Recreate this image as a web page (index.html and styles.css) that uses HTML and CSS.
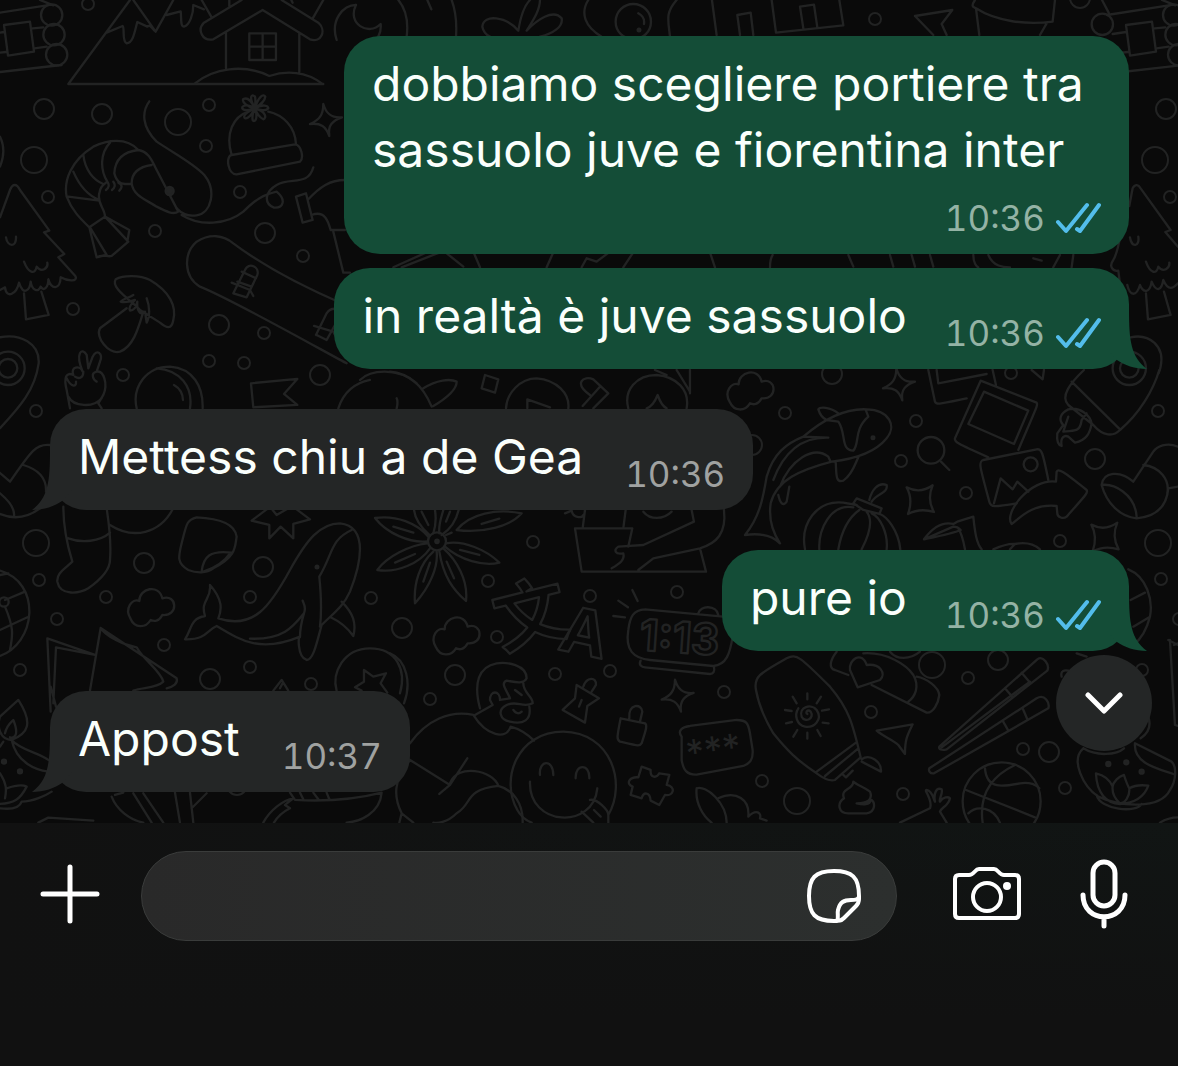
FILE: index.html
```html
<!doctype html>
<html lang="it">
<head>
    <meta charset="utf-8">
    <meta name="viewport" content="width=device-width, initial-scale=1">
    <title>Chat</title>
    <link rel="stylesheet" href="styles.css">
</head>
<body>

<!-- shared shapes -->
<svg class="defs" aria-hidden="true">
    <symbol id="ticks" viewBox="0 0 46 32">
        <path d="M3 20l8 9L32 3M22 27l3 2L44 3"/>
    </symbol>
    <symbol id="tail" viewBox="0 0 40 60">
        <path d="M22 0C22 32 24 48 40 60C28 60 17 56 10 51L0 40V0z"/>
    </symbol>
</svg>

<main class="chat">
    <svg class="wallpaper" viewBox="0 0 1178 823" preserveAspectRatio="xMidYMin slice" aria-hidden="true">
        <defs>
            <path id="cloud" d="M-60 32C-80 0 -55 -30 -34 -22C-35 -60 25 -75 35 -30C80 -45 85 25 35 20C25 40 10 40 0 35C-15 60 -48 60 -60 32z"/>
            <path id="spark" d="M-8 -48C0 -20 15 -5 48 -8C20 2 5 15 10 48C0 20 -15 8 -48 12C-20 0 -8 -15 -8 -48z"/>
            <path id="star4" d="M-40 -36Q0 -15 38 -42Q20 0 42 38Q0 25 -36 44Q-20 0 -40 -36z"/>
        </defs>

        <!-- dots -->
        <g>
            <circle cx="88" cy="4" r="6"/><circle cx="209" cy="105" r="6"/><circle cx="206" cy="146" r="6"/>
            <circle cx="48" cy="197" r="6"/><circle cx="240" cy="192" r="6"/><circle cx="155" cy="231" r="6"/>
            <circle cx="303" cy="256" r="6"/><circle cx="73" cy="309" r="6"/><circle cx="264" cy="333" r="6"/>
            <circle cx="209" cy="361" r="6"/><circle cx="244" cy="363" r="6"/><circle cx="123" cy="375" r="6"/>
            <circle cx="36" cy="411" r="6"/><circle cx="39" cy="580" r="6"/><circle cx="57" cy="619" r="6"/>
            <circle cx="106" cy="597" r="6"/><circle cx="20" cy="670" r="6"/><circle cx="164" cy="645" r="6"/>
            <circle cx="250" cy="597" r="6"/><circle cx="250" cy="667" r="6"/><circle cx="371" cy="598" r="6"/>
            <circle cx="311" cy="684" r="6"/><circle cx="533" cy="542" r="6"/><circle cx="488" cy="581" r="6"/>
            <circle cx="590" cy="596" r="6"/><circle cx="677" cy="592" r="6"/><circle cx="497" cy="637" r="6"/>
            <circle cx="555" cy="674" r="6"/><circle cx="610" cy="671" r="6"/><circle cx="430" cy="699" r="6"/>
            <circle cx="724" cy="692" r="6"/><circle cx="762" cy="781" r="6"/><circle cx="785" cy="413" r="6"/>
            <circle cx="916" cy="421" r="6"/><circle cx="901" cy="461" r="6"/><circle cx="966" cy="493" r="6"/>
            <circle cx="1060" cy="541" r="6"/><circle cx="1158" cy="411" r="6"/><circle cx="1161" cy="579" r="6"/>
            <circle cx="1011" cy="373" r="6"/><circle cx="1179" cy="619" r="6"/><circle cx="968" cy="678" r="6"/>
            <circle cx="871" cy="712" r="6"/><circle cx="1023" cy="749" r="6"/><circle cx="1065" cy="788" r="6"/>
            <circle cx="903" cy="794" r="6"/><circle cx="1142" cy="670" r="6"/><circle cx="875" cy="19" r="6"/>
            <circle cx="1170" cy="197" r="6"/>
            <circle cx="44" cy="109" r="10"/><circle cx="102" cy="114" r="10"/><circle cx="265" cy="233" r="10"/>
            <circle cx="219" cy="325" r="10"/><circle cx="320" cy="375" r="10"/><circle cx="144" cy="563" r="10"/>
            <circle cx="263" cy="567" r="10"/><circle cx="210" cy="679" r="10"/><circle cx="402" cy="628" r="10"/>
            <circle cx="455" cy="675" r="10"/><circle cx="832" cy="374" r="10"/><circle cx="1095" cy="459" r="10"/>
            <circle cx="752" cy="445" r="10"/><circle cx="998" cy="660" r="10"/><circle cx="1049" cy="752" r="10"/>
            <circle cx="1080" cy="-2" r="10"/><circle cx="1166" cy="109" r="10"/><circle cx="237" cy="785" r="10"/>
            <circle cx="34" cy="160" r="13"/><circle cx="178" cy="122" r="13"/><circle cx="36" cy="543" r="13"/>
            <circle cx="1155" cy="160" r="13"/><circle cx="1158" cy="543" r="13"/><circle cx="932" cy="665" r="13"/>
            <circle cx="797" cy="801" r="13"/>
        </g>

        <!-- top left: mountains, hut, prawn, hat, snowboard, mushroom, hand -->
        <g class="ink" transform="scale(.3333)">
            <path d="M390 0L205 252H970M320 98L368 78C375 85 365 125 380 130C400 130 405 90 412 66L442 80C450 72 455 85 467 95L520 0M400 0L467 95M500 45L542 34C545 50 540 80 552 80C570 75 580 40 580 15L612 28M605 0L635 52"/>
            <path d="M585 250C640 205 730 190 808 228C860 210 920 215 965 250M678 205V98M898 215V100M725 0L612 68C590 90 608 125 640 118L788 30L930 118C965 130 980 90 955 68L845 0M688 18V0M878 8L874 0M940 52L970 0"/>
            <path d="M748 100H828V180H748zM788 100V180M748 140H828"/>
            <path d="M448 304C425 335 425 380 470 425C530 465 580 490 613 525C650 570 635 640 590 646C560 650 545 640 530 625M545 645C600 680 680 675 730 635C770 595 790 585 830 575C860 600 850 625 822 623C790 610 795 575 830 555C870 530 925 560 940 502"/>
            <path d="M415 450C380 410 320 420 280 440C215 480 190 540 200 590C215 630 240 655 268 682L315 650C315 625 290 610 298 580C300 560 310 555 322 545C300 510 300 460 330 428M415 450C445 455 455 480 465 500L535 635C520 645 500 635 470 620C430 595 400 585 395 550C395 515 420 500 455 495M415 450C370 455 345 480 343 520C350 545 360 550 375 552H395M250 465C255 510 280 540 310 552M220 515C235 550 260 585 298 600M205 590L298 602M322 545C330 555 325 565 318 570M340 545C348 555 343 565 336 570M355 548C370 555 365 565 358 572M268 682L290 772L320 765L270 682M290 772C310 760 320 772 335 768L385 725L315 650L388 690L382 725"/>
            <circle class="fill" cx="509" cy="573" r="12"/>
            <path d="M695 465C675 400 700 350 745 335M805 335C850 345 885 380 888 432M695 465L885 433C905 435 912 475 900 485L710 523C685 525 675 470 695 465z"/>
            <path d="M765 325C740 320 725 305 730 297C745 290 755 305 765 325C745 290 755 280 765 290C768 300 765 315 765 325C775 290 790 280 796 290C795 305 780 315 765 325C790 310 805 318 805 325C795 335 780 330 765 325C800 335 800 355 790 358C775 350 770 340 765 325C775 355 765 370 758 360C755 345 760 335 765 325C750 355 735 360 733 352C730 345 745 335 765 325C740 335 722 330 728 320C735 312 755 318 765 325"/>
            <use href="#spark" x="978" y="360"/>
            <path d="M888 590L918 580L938 660L908 668zM925 598C960 560 990 540 1035 540M935 645C975 630 985 665 992 690H1035M1000 695L1030 818H1050"/>
            <path d="M0 652L30 570C38 550 50 550 60 570L148 692L132 697L193 762L175 772L226 828C235 845 205 845 182 832C180 870 155 870 145 838C145 865 130 875 122 860C115 880 95 870 92 845C90 870 70 890 57 848C50 880 20 900 15 862L0 870M72 880L78 958L146 945L124 875M18 712C22 740 50 745 48 710M72 785C85 820 105 825 110 800C125 820 145 805 142 788"/>
            <path d="M1040 1090C1000 1070 700 900 600 860C550 830 550 760 590 725C630 700 670 705 700 730C800 805 920 865 1030 912"/>
            <path d="M700 880L735 810C745 785 780 800 772 825L740 892zM695 848L750 870L760 888M712 845L755 860M725 815L768 835M948 1005L980 940C995 915 1030 930 1040 940M950 1005L980 1020L1030 930M942 978L1000 995L1010 1015"/>
            <path d="M347 838C370 825 420 825 450 840C510 875 530 920 520 960C515 990 500 985 480 968L420 930C400 905 330 865 347 838zM380 925L300 985C285 1010 325 1065 360 1055C400 1040 415 985 430 935M400 885C385 895 370 895 362 905C375 910 390 905 405 900C390 915 385 925 390 932C410 930 410 910 412 905C410 930 420 950 435 935L440 968C450 950 450 920 440 895"/>
            <path d="M210 1225L200 1170C190 1130 200 1115 220 1125C210 1100 240 1095 248 1115C225 1060 245 1040 260 1065L265 1105L278 1070C290 1045 310 1060 300 1085L290 1115C310 1110 325 1150 310 1185L295 1210L305 1225M290 1115C270 1120 280 1140 290 1145M200 1135C215 1165 230 1160 228 1145M225 1130C240 1140 250 1130 250 1115M205 1190C220 1220 280 1225 305 1195"/>
            <path d="M410 1225C395 1160 440 1100 510 1100C580 1105 610 1160 608 1225M470 1105C540 1110 580 1160 570 1225M522 1155C540 1165 548 1180 549 1200M760 1222L753 1150L892 1137L852 1182L892 1215zM1015 1225C1030 1180 1060 1150 1110 1140"/>
        </g>

        <!-- between the first bubbles and above them -->
        <g class="ink" transform="translate(340 0) scale(.3333)">
            <path d="M48 15C10 15 -30 60 -10 120M48 15C20 70 85 110 122 72C125 100 110 120 100 125M175 0C200 30 205 70 200 110M262 0L274 28M335 0C350 40 350 80 348 110"/>
            <path d="M535 92C500 50 430 40 427 80C430 95 440 105 450 110M535 92C540 60 550 20 570 0M600 0C600 30 580 60 560 92C590 60 640 25 665 55C670 80 640 100 600 110M745 0C720 40 735 80 785 110M1010 0C975 40 985 60 990 110M895 40C910 48 914 60 912 72M1116 0L1130 105"/>
            <circle cx="880" cy="65" r="53"/><circle class="fill" cx="897" cy="90" r="4"/>
            <path d="M160 802L260 757M185 802L300 757M320 760L370 800M400 755L420 802M620 802L640 757M725 802L740 775L770 785L810 755M850 802L880 757M1110 757L1125 802"/>
            <path d="M60 1140C90 1110 170 1100 230 1150"/>
        </g>

        <!-- top right -->
        <g class="ink" transform="translate(720 0) scale(.3333)">
            <path d="M60 105L52 45L92 38L100 105M155 0L168 98L370 76L358 0M250 85L240 20L282 14L292 82M585 48L697 30L665 72L680 105M585 48L640 105M765 0C755 15 755 20 768 25C830 65 920 75 998 65L1005 0M768 25L778 105M980 70L960 105"/>
            <path d="M150 802C150 780 155 770 158 765M385 765L400 800M510 765L520 800M575 765L585 800M630 765L640 800M760 765C760 790 770 800 775 802M805 765C820 800 850 802 870 802M940 775L965 782M1020 765L1000 802M1060 765L1055 802"/>
            <path d="M1225 615C1200 680 1200 750 1180 780C1165 800 1180 815 1195 812L1200 850M1222 855C1230 890 1250 890 1260 855C1270 880 1290 880 1295 845C1310 880 1325 870 1330 840C1345 875 1360 865 1374 850M1228 618L1238 565C1246 550 1256 555 1262 565L1352 690L1336 696L1374 740M1230 712C1235 745 1260 740 1255 710M1278 785C1290 820 1310 825 1315 800C1330 820 1350 805 1348 788M1278 880L1284 958L1352 945L1332 875"/>
            <path d="M1232 1012C1290 1000 1335 1040 1322 1100C1320 1110 1318 1115 1316 1120"/>
        </g>

        <!-- log pile and pin, one at each edge -->
        <g id="logs" class="ink" transform="translate(1122 0) scale(.3333)">
            <circle cx="-59" cy="73" r="32"/><circle cx="155" cy="45" r="32"/><circle cx="162" cy="104" r="32"/><circle cx="170" cy="164" r="32"/>
            <path d="M-45 45L155 14M-60 0L-40 38M12 75L90 65L102 155L24 167zM-28 102L12 96M98 85L130 82M104 145L140 140M-20 160L18 156M0 216L185 195M120 0L160 16"/>
        </g>
        <use href="#logs" x="-1122"/>
        <g class="ink" transform="scale(.3333)">
            <circle cx="24" cy="1105" r="28"/><circle cx="24" cy="1105" r="50"/>
            <path d="M0 1012C60 1000 120 1030 116 1090C105 1170 60 1220 0 1285M0 410C15 440 12 470 0 500"/>
        </g>

        <!-- bottom left: boot, sock, sticker, whale, samosa, candle, ball -->
        <g class="ink" transform="translate(0 400) scale(.3333)">
            <path d="M150 135C110 130 95 150 30 245L-5 215M70 195C120 210 140 240 138 275M0 280C30 305 45 330 42 350M-5 340C40 360 80 355 120 325"/>
            <path d="M190 320C190 370 200 430 217 485C190 510 170 520 172 545C180 590 240 580 265 565C300 540 330 510 330 480C335 420 325 360 320 325M205 415C245 430 300 425 330 398M330 375C400 420 480 400 518 328"/>
            <path d="M590 352C560 360 560 370 545 430C535 470 530 490 565 510C590 520 620 520 640 505C710 470 705 440 710 410C705 370 660 355 590 352zM605 515C610 470 630 450 695 458M690 460C670 490 640 505 610 515M755 362L800 328M755 362L808 375V415L842 380L880 415V372L930 358L890 328M818 330L830 345L860 328"/>
            <path d="M555 718C575 690 570 655 615 648C600 600 635 600 630 555C670 600 665 630 655 655C760 690 810 620 870 510C920 420 960 370 1020 370C1110 380 1080 500 1050 575C1030 620 1000 640 965 675C950 730 940 780 920 780C890 770 895 700 900 710C780 760 720 720 650 678C620 690 620 720 555 718zM750 716C850 720 880 680 912 640C920 620 910 610 908 602M912 640C900 680 900 700 900 712M1055 390C990 420 1000 460 958 530C965 600 965 640 960 680M1025 605C1060 640 1070 670 1060 708C1040 680 1020 665 992 652"/>
            <circle class="fill" cx="951" cy="501" r="4"/>
            <use href="#cloud" x="452" y="625"/>
            <path d="M0 512C60 530 90 580 88 640C85 700 50 750 0 768M0 525L25 520M15 600L75 575M15 620C40 680 40 700 30 750M0 690L82 652"/>
            <circle cx="12" cy="606" r="14"/>
            <path d="M152 935L142 715L285 765M160 910L168 742L285 765M270 872L302 684L530 835C535 850 520 860 500 865M302 684C320 710 370 735 410 742C430 780 480 810 490 845C470 865 430 862 400 872M152 860L168 920"/>
            <path d="M0 950L55 900C100 970 85 1000 35 1020C0 1020 -10 980 0 950M15 1000C20 975 35 965 40 960C60 1010 40 1015 30 1012M35 1020C60 1050 120 1060 145 1080M35 1020C50 1090 110 1110 145 1115M0 1040L10 1025M0 1120C20 1150 20 1170 15 1195M20 1165C50 1155 70 1155 80 1160C60 1200 40 1210 0 1212M0 1225C40 1230 60 1220 65 1205C100 1205 140 1185 155 1175"/>
            <circle class="fill" cx="12" cy="1085" r="6"/><circle class="fill" cx="60" cy="1114" r="6"/>
            <path d="M820 872L845 840L865 872M840 865L848 850M1010 872C995 820 1030 745 1110 745C1190 745 1220 810 1200 880M1085 872L1065 862L1092 845V810L1120 830L1158 820L1142 850L1162 878"/>
            <path d="M115 1268L145 1253L280 1262M335 1190C350 1230 390 1260 430 1268M400 1180L455 1268M430 1180L490 1268M525 1178L540 1268M570 1178L580 1268M575 1225L620 1180M345 1185L370 1178M790 1268C810 1230 850 1200 880 1195L855 1215L870 1225C840 1240 830 1255 822 1268M870 1178L885 1200C980 1205 1060 1200 1145 1178M900 1178L910 1198M940 1178L955 1198M980 1178L988 1198M1145 1178C1140 1240 1080 1265 1040 1268"/>
        </g>

        <!-- middle: anise, plant, translate, clock, faces -->
        <g class="ink" transform="translate(390 370) scale(.3333)">
            <path d="M0 5C60 10 100 50 125 110M100 55C140 30 180 25 200 35C200 60 160 90 130 108M20 85C25 95 22 105 20 115M285 15L325 28L315 68L275 55zM348 115C350 70 390 25 440 25C500 30 540 70 535 115M412 115V88L480 112M600 75C550 40 580 15 610 28L655 70L610 115M630 50L578 108M715 115C700 60 740 15 800 15C860 20 900 60 890 115M770 115C785 110 795 95 803 75C810 95 820 110 830 115M795 0L830 15M900 0V70M860 0L900 65"/>
            <use href="#cloud" x="1080" y="65"/>
            <path d="M118 495C90 470 75 445 72 420M130 490C140 460 138 440 135 420M148 490C145 460 155 440 160 420M155 495C185 475 200 445 206 420M95 425L115 465M180 425L168 455M115 500C80 460 20 435 -45 444C-10 490 60 520 112 514M10 470L70 488M168 495L185 488M200 480C240 430 320 415 395 430C360 470 280 490 200 480M275 462L328 446M168 520C220 510 290 540 328 578C280 590 210 570 165 530M210 540L268 555M112 520C60 525 -10 560 -38 600C20 610 90 580 120 535M15 578L75 552M130 545C90 580 70 640 75 700C120 650 145 590 140 545M100 635L120 578M148 545C160 620 190 660 228 693C235 630 200 570 160 535M170 575L192 625"/>
            <circle cx="141" cy="514" r="27"/><circle class="fill" cx="141" cy="514" r="5"/>
            <path d="M555 475H727L715 530M555 475L575 605H948L930 535M578 475L585 420M700 475L707 420M525 430L545 422C550 445 575 445 580 435M760 425C780 450 820 450 845 425M905 420L912 455L760 525L685 530C670 540 675 555 700 550C705 570 690 580 665 595M1002 420C1010 490 980 520 930 535L790 565L745 600"/>
            <text class="glyph-cn" transform="translate(334 838) rotate(-14)">文</text>
            <text class="glyph-a" transform="translate(500 838) rotate(12)">A</text>
            <path d="M670 738L705 742M685 692L714 712M727 660L743 693M765 718C730 720 720 740 715 780C705 840 730 865 780 870L970 888C1010 885 1020 850 1028 800M765 718L1000 740M925 730C930 705 980 705 985 735M752 872C745 885 755 892 765 892L960 912C970 912 975 905 972 890"/>
            <text class="glyph-clock" transform="translate(746 840) rotate(4)">1:13</text>
            <use href="#cloud" x="198" y="800"/>
            <path d="M0 850C50 870 65 940 42 1000M60 1120C110 1050 180 1020 250 1035C290 1100 350 1110 362 1070C400 1080 420 1100 432 1112M270 1015C250 940 265 890 320 880C350 875 410 885 410 925C400 945 370 935 350 932C330 940 350 960 360 985L330 990C330 960 300 960 300 990L308 1005L255 1035M400 940C400 970 430 980 428 1000C400 1015 380 990 350 1005C320 1020 330 1050 360 1055C400 1065 425 1050 418 1010M375 960L395 975M370 1020C380 1035 390 1030 395 1025"/>
            <path d="M60 1170L180 1245L232 1165M180 1245L148 1272M180 1240C200 1180 310 1200 325 1248C220 1260 250 1300 200 1330C170 1360 140 1360 130 1358M60 1170C10 1230 10 1280 35 1330L28 1358M325 1248C370 1260 400 1300 398 1358M35 1330L70 1358"/>
            <path d="M382 1320C330 1230 380 1085 520 1085C665 1088 710 1240 655 1335M425 1358C405 1350 392 1338 382 1320M450 1215C445 1170 490 1165 490 1215M557 1225C555 1180 600 1180 598 1225M420 1235C415 1370 610 1380 622 1255M600 1290C620 1285 655 1320 655 1335V1358M575 1325L610 1358M612 1320L632 1340"/>
            <path d="M518 1020L585 1058L592 1008L627 985L560 945L555 985zM567 1010L575 990M580 950C590 920 620 920 618 945L605 965M692 1045L765 1060C772 1065 770 1075 755 1120C750 1130 745 1128 690 1115C680 1110 680 1105 692 1045zM718 1045C715 1000 755 1000 757 1025L750 1055"/>
            <use href="#spark" x="863" y="977"/>
            <path d="M875 1100C860 1080 880 1070 900 1068L1040 1050C1070 1050 1075 1060 1080 1090L1088 1140C1090 1170 1080 1180 1060 1188L920 1214C890 1215 880 1200 875 1170z"/>
            <text class="glyph-pin" transform="translate(894 1190) rotate(-8)">***</text>
            <path d="M755 1190L782 1200C780 1225 800 1225 808 1210L838 1215L830 1245C860 1250 850 1280 825 1275L808 1305L782 1292C780 1265 760 1265 755 1285L722 1275L728 1250C705 1240 720 1220 745 1222zM920 1255C915 1300 940 1340 965 1358M920 1255C950 1245 1010 1300 1010 1358M985 1285C1040 1260 1080 1290 1075 1340C1100 1315 1115 1330 1110 1345L1130 1352"/>
        </g>

        <!-- right: koi, pumpkin, photos, boot, rocket -->
        <g class="ink" transform="translate(720 370) scale(.3333)">
            <use href="#spark" x="537" y="43"/>
            <use href="#star4" x="600" y="388"/>
            <use href="#star4" x="1154" y="500"/>
            <path d="M250 200C320 140 380 115 440 118C510 120 530 170 500 205C460 255 380 270 335 275C240 300 170 330 152 400C145 450 160 490 180 520C150 490 110 490 75 495C120 440 130 380 140 320C160 250 200 220 250 200L325 203C240 200 190 250 160 330M180 350C210 270 280 225 325 260L332 275M355 130C330 110 300 110 295 118C300 135 310 145 320 150L355 155C380 190 360 240 400 242C420 220 400 180 445 140L438 122M347 275C350 310 345 340 370 332C400 310 405 280 415 262M175 375C180 400 190 410 200 395L208 350"/>
            <circle class="fill" cx="459" cy="203" r="4"/>
            <path d="M255 538C240 460 290 390 370 398L410 405M298 538C295 480 330 400 400 412M355 538C365 480 390 440 418 420M425 538C450 490 460 450 440 425M500 538C505 490 480 440 455 430M541 538C535 480 500 440 480 432M400 400L410 385L485 415L478 432L430 420zM448 390C455 360 475 335 500 345C505 370 470 370 455 395"/>
            <circle cx="633" cy="241" r="40"/>
            <path d="M663 275L688 300M625 0L645 95C650 105 655 103 740 85M650 0L655 40L800 12M818 0L828 45M782 32L950 98C955 105 950 110 895 240M782 32L705 205C702 215 710 220 805 262M792 65L925 122L882 222L745 162zM935 0L968 28L972 0"/>
            <path d="M790 270L950 238C965 236 968 245 985 330M790 270C775 275 778 285 808 395C812 412 820 412 890 400M822 400L842 325L878 358L892 335L925 365"/>
            <circle cx="932" cy="283" r="21"/>
            <path d="M875 462C850 430 930 325 1008 335L1010 305C1015 295 1025 300 1100 360C1105 368 1100 372 1040 440C1030 448 1012 442 1012 430L1010 408C930 400 895 450 875 462zM612 508L700 470C715 470 720 478 722 480C700 490 650 500 612 508C640 470 670 455 700 462L712 455L760 440C765 490 770 520 785 538M715 475C725 490 730 510 735 538M820 538C850 525 870 520 885 522L870 538M885 522C920 515 945 525 960 538"/>
            <circle cx="1228" cy="-5" r="28"/><circle cx="1228" cy="-5" r="50"/>
            <path d="M1092 0C1050 40 1020 80 1045 105L1120 165C1150 200 1180 200 1200 180C1260 130 1300 60 1318 0M1055 35L1200 178M1045 118C1020 130 1015 150 1030 165L1012 190C1010 210 1015 225 1025 228C1020 200 1035 195 1045 200L1065 218C1100 210 1110 190 1115 160C1110 135 1080 110 1045 118zM1045 140L1030 185C1060 180 1080 190 1085 150L1100 130"/>
            <path d="M1374 230C1340 215 1310 230 1300 245L1240 335C1200 300 1150 305 1145 345C1160 400 1200 440 1250 445C1310 440 1340 410 1345 355L1374 350M1145 345C1180 340 1245 370 1250 440M1270 285C1320 290 1350 330 1342 370"/>
            <path d="M1225 598C1280 620 1300 690 1290 740C1280 780 1260 810 1240 825M1232 690L1275 668M1240 770L1290 740M1345 810L1374 825"/>
        </g>

        <!-- bottom right: sun cream, chopsticks, basketball, bowl -->
        <g class="ink" transform="translate(720 640) scale(.3333)">
            <path d="M108 150C100 110 120 100 200 55C230 40 240 50 330 140C390 210 400 260 422 352L345 420C330 425 310 415 290 400C230 360 200 330 160 280C130 230 115 190 108 150zM290 395L408 308M315 408L415 325M370 405L378 412L398 392M425 358C450 340 485 365 483 395L425 365M400 425C400 450 360 445 372 475C350 490 355 520 385 520H440C470 515 465 480 452 480C450 495 430 495 410 490C440 490 460 480 450 455C430 440 410 435 400 425z"/>
            <path d="M262 160V178M262 278V296M195 210L215 213M308 248L326 250M218 170L230 190M303 170L290 190M327 208L306 212M198 250L216 246M220 290L232 270M302 288L292 270M262 222C255 220 262 205 272 215C285 235 255 250 245 230C235 200 275 190 290 210C310 240 280 265 255 260C230 255 222 225 235 205"/>
            <path d="M350 35C330 60 325 85 345 90L385 105M430 40C500 35 560 75 580 105C600 140 585 170 565 185M455 135L620 218C640 220 655 190 658 165C655 140 620 115 590 110M510 35C530 60 570 60 600 35M413 142L390 90C385 60 425 30 440 75C480 70 500 100 480 120z"/>
            <path d="M658 320L952 58C970 45 990 75 982 92L680 328C665 332 655 328 658 320zM665 322L930 125M855 145L875 168M905 98L928 125M628 385L950 175C975 160 990 190 985 205L642 400C630 402 625 392 628 385zM848 242L865 272M908 205L922 238M470 272L578 253C560 290 555 300 555 342L535 315C520 300 490 290 470 272z"/>
            <circle cx="845" cy="484" r="117"/>
            <path d="M738 450L945 532M795 385C800 450 850 440 900 430C930 425 950 435 958 445M885 375C790 420 780 490 788 548M745 520C770 495 820 500 840 548M540 548L630 505C640 480 610 450 620 450C640 455 640 480 645 485C640 460 650 440 665 448C670 460 655 480 660 485C670 470 685 470 690 475C685 500 665 500 660 515L680 548"/>
            <path d="M1090 325C1050 360 1090 440 1135 470C1200 500 1320 510 1350 450C1370 420 1370 380 1355 365L1245 310C1240 370 1310 385 1360 402M1128 400C1150 405 1170 420 1178 440C1180 425 1195 410 1212 405C1220 430 1225 440 1228 445C1245 435 1270 435 1285 437C1270 480 1230 490 1200 492C1160 490 1130 460 1128 400zM1178 440C1175 470 1195 485 1200 490M1228 445C1230 470 1215 490 1200 490M1130 465C1140 510 1250 520 1265 492M1090 325C1130 350 1190 345 1212 325M1285 230C1295 260 1285 280 1262 295M1350 0L1365 255L1374 258M1362 15L1374 10M1070 40L1100 50M1025 110C1020 90 1035 90 1045 92M1320 548C1340 535 1360 532 1374 532"/>
            <circle class="fill" cx="1165" cy="372" r="6"/><circle class="fill" cx="1219" cy="367" r="6"/><circle class="fill" cx="1265" cy="395" r="6"/>
        </g>
    </svg>

    <ul class="messages">
        <li class="msg out">
            <p>dobbiamo scegliere portiere tra sassuolo juve e fiorentina inter</p>
            <div class="meta"><time>10:36</time><svg class="ticks" role="img" aria-label="Letto"><use href="#ticks"/></svg></div>
        </li>
        <li class="msg out last">
            <p>in realtà è juve sassuolo</p>
            <div class="meta"><time>10:36</time><svg class="ticks" role="img" aria-label="Letto"><use href="#ticks"/></svg></div>
            <svg class="tail" aria-hidden="true"><use href="#tail"/></svg>
        </li>
        <li class="msg in last">
            <p>Mettess chiu a de Gea</p>
            <div class="meta"><time>10:36</time></div>
            <svg class="tail" aria-hidden="true"><use href="#tail"/></svg>
        </li>
        <li class="msg out last">
            <p>pure io</p>
            <div class="meta"><time>10:36</time><svg class="ticks" role="img" aria-label="Letto"><use href="#ticks"/></svg></div>
            <svg class="tail" aria-hidden="true"><use href="#tail"/></svg>
        </li>
        <li class="msg in last">
            <p>Appost</p>
            <div class="meta"><time>10:37</time></div>
            <svg class="tail" aria-hidden="true"><use href="#tail"/></svg>
        </li>
    </ul>

    <button type="button" class="to-bottom" aria-label="Vai in fondo">
        <svg width="38" height="24" viewBox="0 0 38 24"><path d="M3 4l16 16L35 4"/></svg>
    </button>
</main>

<footer class="composer">
    <button type="button" class="plus" aria-label="Allega">
        <svg width="60" height="60" viewBox="0 0 60 60"><path d="M30 3v54M3 30h54"/></svg>
    </button>
    <div class="field">
        <input type="text" aria-label="Messaggio">
        <button type="button" aria-label="Sticker">
            <svg width="56" height="56" viewBox="0 0 56 56"><path d="M28 3C46 3 53 9 53 28V31C53 34 52 36 50 38L38 50C35 53 33 53 28 53C9 53 3 46 3 28S9 3 28 3zM31 53C33 50 31 46 32 42C34 34 38 32 45 32C49 32 51 32 53 29"/></svg>
        </button>
    </div>
    <button type="button" class="camera" aria-label="Fotocamera">
        <svg width="70" height="56" viewBox="0 0 70 56"><path d="M7 9H17C22 9 23 3 27 3H42C46 3 47 9 52 9H63Q67 9 67 13V48Q67 52 63 52H7Q3 52 3 48V13Q3 9 7 9z"/><circle cx="35" cy="31" r="14"/><circle class="dot" cx="55" cy="20" r="4"/></svg>
    </button>
    <button type="button" class="mic" aria-label="Messaggio vocale">
        <svg width="48" height="70" viewBox="0 0 48 70"><rect x="13" y="3" width="22" height="44" rx="11"/><path d="M3 36C3 65 45 65 45 36M24 58v9"/></svg>
    </button>
</footer>

</body>
</html>
```

FILE: styles.css
```css
* {
    box-sizing: border-box;
}

body, ul, p {
    margin: 0;
    padding: 0;
    list-style: none;
}

body {
    display: flex;
    flex-direction: column;
    min-height: 100vh;
    background: #0a0a0a;
    color: #fafffc;
    font-family: Inter, "Liberation Sans", sans-serif;
}

button {
    padding: 0;
    border: 0;
    background: none;
    cursor: pointer;
}

button svg {
    display: block;
    fill: none;
    stroke: #fff;
    stroke-width: 5;
    stroke-linecap: round;
    stroke-linejoin: round;
}

.defs {
    position: absolute;
    width: 0;
    height: 0;
}

/* chat */
.chat {
    position: relative;
    flex: 1;
    overflow: hidden;
}

.wallpaper {
    position: absolute;
    top: 0;
    left: 0;
    width: 100%;
    height: 100%;
    fill: none;
    stroke: #222323;
    stroke-width: 2;
    stroke-linecap: round;
    stroke-linejoin: round;
}

.ink {
    stroke-width: 7;
}

.ink .fill {
    fill: #222323;
}

.ink text {
    font-weight: 700;
}

.glyph-cn {
    font-family: "Noto Sans CJK SC", sans-serif;
    font-size: 220px;
}

.glyph-a {
    font-size: 190px;
}

.glyph-clock {
    font-size: 130px;
}

.ink .glyph-pin {
    font-size: 110px;
    font-weight: 400;
    stroke: none;
    fill: #222323;
}

.messages {
    position: relative;
    display: flex;
    flex-direction: column;
    padding: 36px 49px 31px 50px;
}

.msg {
    position: relative;
    display: flex;
    flex-wrap: wrap;
    align-items: flex-end;
    gap: 7px 42px;
    max-width: 785px;
    margin-bottom: 40px;
    padding: 15px 28px 14px;
    border-radius: 36px;
}

.msg:first-child {
    margin-bottom: 14px;
}

.msg:last-child {
    margin-bottom: 0;
}

.msg p {
    margin-bottom: 6px;
    font-size: 48px;
    line-height: 66px;
}

.out {
    align-self: flex-end;
    column-gap: 38px;
    background: #144d37;
    fill: #144d37;
}

.in {
    align-self: flex-start;
    background: #242626;
    fill: #242626;
}

.out.last {
    max-width: 820px;
}

.meta {
    display: flex;
    align-items: center;
    gap: 10px;
    margin-left: auto;
    font-size: 35px;
    font-variant-numeric: tabular-nums;
    line-height: 44px;
    color: #a0a2a1;
}

.out .meta {
    color: #94b3a5;
}

.ticks {
    width: 46px;
    height: 32px;
    fill: none;
    stroke: #53bdeb;
    stroke-width: 4;
    stroke-linecap: round;
    stroke-linejoin: round;
}

.tail {
    position: absolute;
    right: -18px;
    bottom: 0;
    width: 40px;
    height: 60px;
}

.in .tail {
    right: auto;
    left: -18px;
    transform: scaleX(-1);
}

.to-bottom {
    position: absolute;
    right: 26px;
    bottom: 72px;
    display: flex;
    align-items: center;
    justify-content: center;
    width: 96px;
    height: 96px;
    border-radius: 50%;
    background: #242626;
}

/* composer */
.composer {
    display: flex;
    align-items: center;
    padding: 28px 50px 125px 40px;
    background: linear-gradient(to bottom, transparent, #111 80%), linear-gradient(to right, #111, #111514);
}

.composer > button {
    margin-bottom: 4px;
}

.field {
    display: flex;
    flex: 1;
    align-items: center;
    min-width: 0;
    height: 90px;
    margin: 0 55px 0 41px;
    padding: 0 34px 0 40px;
    border: 1px solid #3a3c3b;
    border-radius: 45px;
    background: linear-gradient(to right, #292929, #2c2f2e);
}

.field input {
    flex: 1;
    min-width: 0;
    border: 0;
    outline: 0;
    background: none;
    color: #fff;
    font: 48px Inter, "Liberation Sans", sans-serif;
}

.camera {
    margin-right: 58px;
}

.camera svg,
.field svg {
    stroke-width: 4;
}

.camera .dot {
    fill: #fff;
    stroke: none;
}
```
